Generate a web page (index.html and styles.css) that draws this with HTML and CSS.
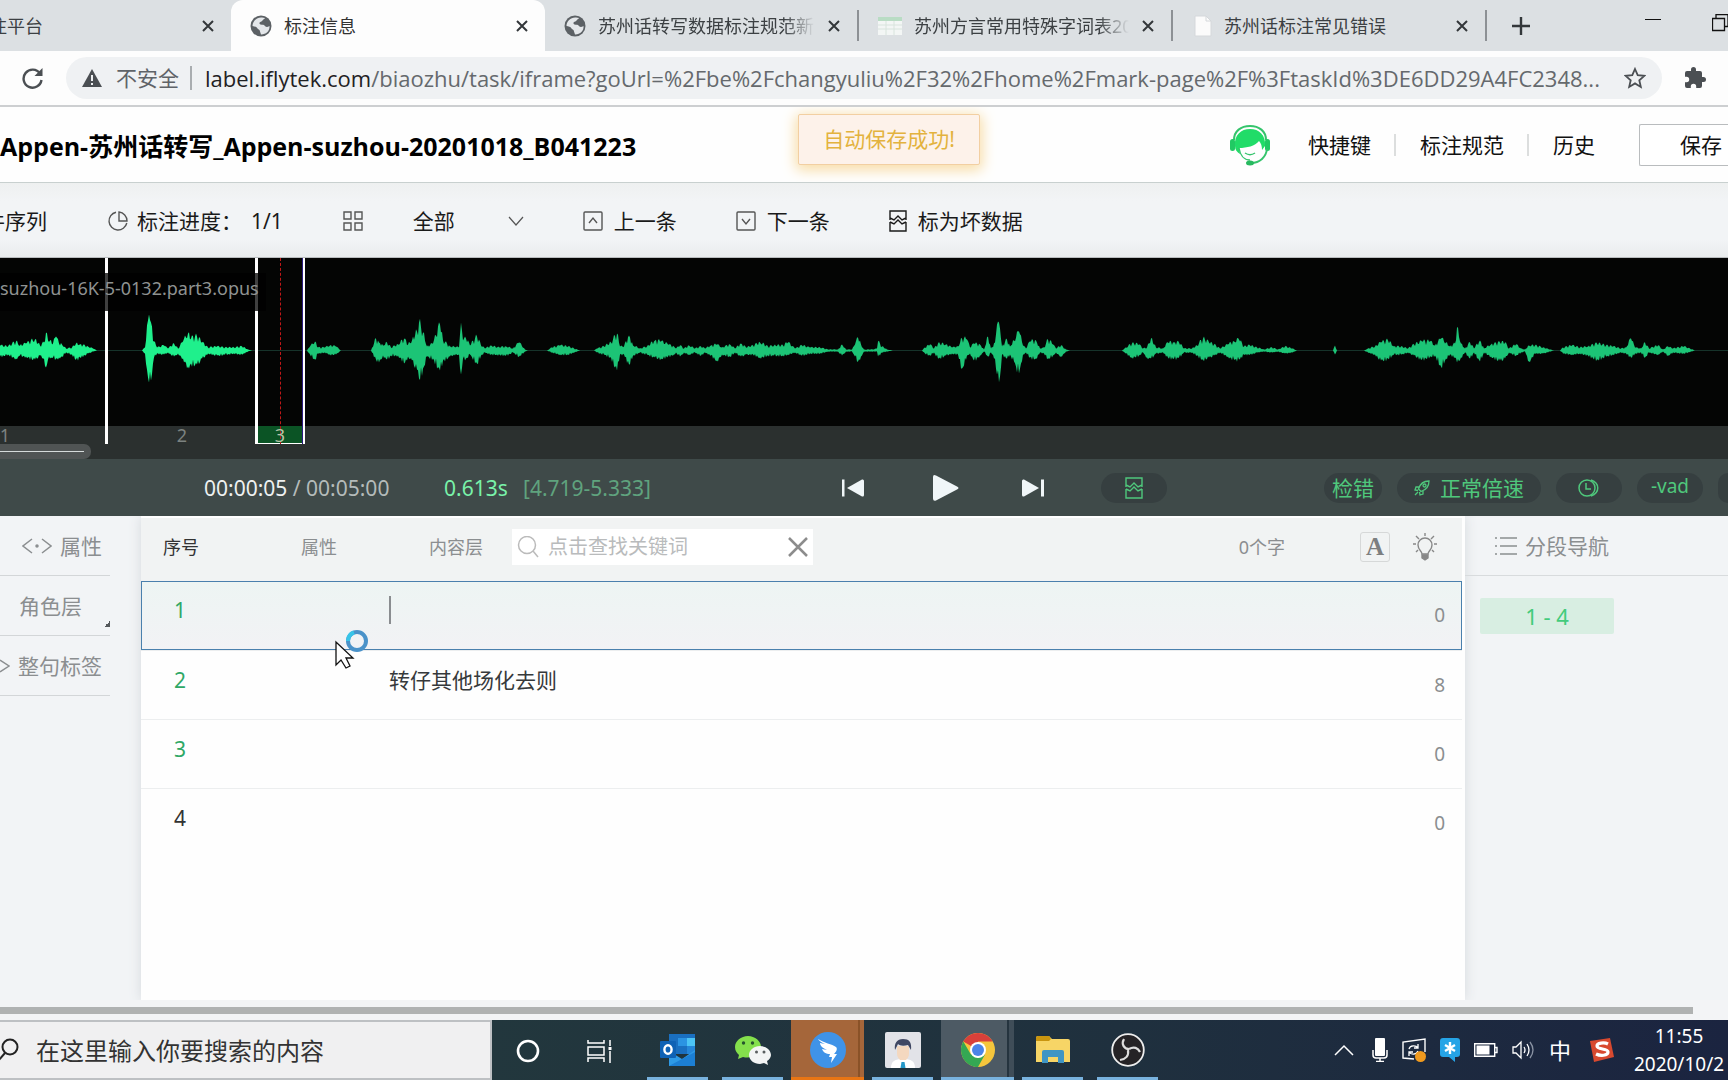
FILE: index.html
```html
<!DOCTYPE html>
<html lang="zh-CN">
<head>
<meta charset="utf-8">
<title>标注信息</title>
<link rel="stylesheet" href="styles.css">
</head>
<body>
<svg class="defs" aria-hidden="true">
  <symbol id="globe" viewBox="0 0 22 22"><circle cx="11" cy="11" r="10.500" fill="#5c6165"/><path d="M12 2.500C7 2 2.500 6 2.500 11c2 .5 4 .5 5 2.500 1 1.500 2.500 1 2.500 3l1 3c5 .2 9-3.500 8.500-8.500-2.500 1.500-4 1-5-.5-1.500-1.500-4.500 0-5-2s2.500-1.500 3-3 2-1 2.500-2.500z" fill="#e4e7ea"/></symbol>
  <symbol id="close" viewBox="0 0 14 14"><path d="M2 2l10 10M12 2L2 12" stroke="currentColor" stroke-width="2" fill="none"/></symbol>
  <symbol id="bad" viewBox="0 0 18 22"><path d="M1 8V1h16v7M1 8l4 2 4-4 4 4 4-2M1 12v9h16v-9M1 12l4 2 4-4 4 4 4-2M1 8v2M17 8v2" fill="none" stroke="currentColor" stroke-width="1.400"/></symbol>
</svg>

<nav class="tabs" aria-label="标签页">
  <div class="tab tab-first"><span class="tab-label">标注平台</span><button class="x" aria-label="关闭"><svg width="14" height="14"><use href="#close"/></svg></button></div>
  <div class="tab tab-active"><svg width="22" height="22"><use href="#globe"/></svg><span class="tab-label">标注信息</span><button class="x" aria-label="关闭"><svg width="14" height="14"><use href="#close"/></svg></button></div>
  <div class="tab tab-line"><svg width="22" height="22"><use href="#globe"/></svg><span class="tab-label fade">苏州话转写数据标注规范新1</span><button class="x" aria-label="关闭"><svg width="14" height="14"><use href="#close"/></svg></button></div>
  <div class="tab tab-line"><svg width="24" height="18" viewBox="0 0 24 18"><path fill="#f3f6f5" d="M0 0h24v18H0z"/><path fill="#b9dcc4" d="M0 0h24v4H0z"/><path d="M0 8h24M0 12h24M8 4v14M16 4v14" stroke="#d8e4dd"/></svg><span class="tab-label fade">苏州方言常用特殊字词表2020</span><button class="x" aria-label="关闭"><svg width="14" height="14"><use href="#close"/></svg></button></div>
  <div class="tab tab-line tab-doc"><svg width="18" height="22" viewBox="0 0 18 22"><path d="M1 1h11l5 5v15H1z" fill="#fbfbfb" stroke="#d5d8db"/><path d="M12 1v5h5" fill="none" stroke="#d5d8db"/></svg><span class="tab-label">苏州话标注常见错误</span><button class="x" aria-label="关闭"><svg width="14" height="14"><use href="#close"/></svg></button></div>
  <button class="newtab" aria-label="新标签页"><svg width="18" height="18" viewBox="0 0 18 18"><path d="M9 0v18M0 9h18" stroke="#33373a" stroke-width="2.400"/></svg></button>
  <div class="winbtns">
    <button aria-label="最小化"><svg width="16" height="18" viewBox="0 0 16 18"><path d="M0 5.500h16" stroke="#111"/></svg></button>
    <button aria-label="还原"><svg width="17" height="18" viewBox="0 0 17 18"><path d="M.5 4.500h12v12H.500zM4 4.500v-4h12v12h-3.500" fill="none" stroke="#111" stroke-width="1.300"/></svg></button>
  </div>
</nav>

<div class="addressbar">
  <button class="reload" aria-label="重新加载"><svg width="24" height="22" viewBox="0 0 24 22"><path d="M19 6.500A9 9 0 1 0 20.500 13" fill="none" stroke="#4b4f53" stroke-width="2.400"/><path d="M21.500 1v8h-8z" fill="#4b4f53"/></svg></button>
  <div class="omnibox">
    <svg width="20" height="18" viewBox="0 0 20 18"><path d="M10 0l10 18H0z" fill="#4b4f53"/><path d="M10 6v6M10 14v2" stroke="#eff1f3" stroke-width="2"/></svg>
    <span class="unsafe">不安全</span>
    <span class="url"><b>label.iflytek.com</b>/biaozhu/task/iframe?goUrl=%2Fbe%2Fchangyuliu%2F32%2Fhome%2Fmark-page%2F%3FtaskId%3DE6DD29A4FC2348...</span>
    <button aria-label="收藏"><svg width="22" height="22" viewBox="0 0 22 22"><path d="M11 2l2.700 6.200 6.600.6-5 4.500 1.500 6.600L11 16.400l-5.800 3.500 1.500-6.600-5-4.500 6.600-.6z" fill="none" stroke="#4b4f53" stroke-width="1.800"/></svg></button>
  </div>
  <button class="ext" aria-label="扩展程序"><svg width="24" height="24" viewBox="0 0 24 24"><path d="M20.500 11H19V7a2 2 0 0 0-2-2h-4V3.500a2.500 2.500 0 0 0-5 0V5H4a2 2 0 0 0-2 2v3.800h1.500a2.700 2.700 0 0 1 0 5.400H2V20a2 2 0 0 0 2 2h3.800v-1.500a2.700 2.700 0 0 1 5.400 0V22H17a2 2 0 0 0 2-2v-4h1.500a2.500 2.500 0 0 0 0-5z" fill="#4b4f53"/></svg></button>
</div>

<header class="head">
  <h1>Appen-苏州话转写_Appen-suzhou-20201018_B041223</h1>
  <svg class="service" width="40" height="42" viewBox="0 0 40 42"><path d="M4 16C4 7 11 2 20 2s16 5 16 14" fill="none" stroke="#35c46c" stroke-width="2"/><path d="M5 22C4 11 11 5 20 5s16 6 15 17l-3 4c0-4-1-7-3-9-4 5-12 7-20 7l1 6c-3-2-5-4-5-8z" fill="#21dc68"/><path d="M9 24c1 7 5 12 11 12" fill="none" stroke="#35c46c" stroke-width="1.500"/><path d="M15 29c3 2 7 2 10 0" fill="none" stroke="#35c46c" stroke-width="1.500"/><rect x="0" y="15" width="5" height="12" rx="2.500" fill="#21c963"/><rect x="35" y="15" width="5" height="12" rx="2.500" fill="#21c963"/><path d="M37 25c-1 8-7 14-16 14" fill="none" stroke="#35c46c" stroke-width="2"/><ellipse cx="20" cy="39" rx="4" ry="2.500" fill="#27b95f"/></svg>
  <nav class="headlinks"><a href="#">快捷键</a><a href="#">标注规范</a><a href="#">历史</a></nav>
  <button class="save">保存</button>
  <div class="toast" role="status">自动保存成功!</div>
</header>

<div class="toolbar">
  <span class="seq">文件序列</span>
  <span class="tool t-progress"><svg width="20" height="20" viewBox="0 0 20 20"><path d="M8 1.200A9 9 0 1 0 18.800 12M11 1v9h8A9 9 0 0 0 11 1z" fill="none" stroke="#555" stroke-width="1.400"/></svg>标注进度：<span>1/1</span></span>
  <button class="tool t-grid" aria-label="宫格"><svg width="20" height="20" viewBox="0 0 20 20" fill="none" stroke="#555" stroke-width="1.400"><path d="M1 1h7v7H1zM12 1h7v7h-7zM1 12h7v7H1zM12 12h7v7h-7z"/></svg></button>
  <button class="tool t-all">全部<svg width="16" height="10" viewBox="0 0 16 10"><path d="M1 1l7 8 7-8" fill="none" stroke="#555" stroke-width="1.200"/></svg></button>
  <button class="tool t-prev"><svg width="20" height="20" viewBox="0 0 20 20" fill="none" stroke="#555" stroke-width="1.400"><rect x="1" y="1" width="18" height="18" rx="1"/><path d="M6 12l4-5 4 5"/></svg>上一条</button>
  <button class="tool t-next"><svg width="20" height="20" viewBox="0 0 20 20" fill="none" stroke="#555" stroke-width="1.400"><rect x="1" y="1" width="18" height="18" rx="1"/><path d="M6 8l4 5 4-5"/></svg>下一条</button>
  <button class="tool t-bad"><svg width="18" height="22"><use href="#bad"/></svg>标为坏数据</button>
</div>

<section class="wave" aria-label="波形">
  <svg class="plot" width="1728" height="168" viewBox="0 0 1728 168"><path d="M0 92.500h1728" stroke="#16332a"/><path id="wave-near" fill="#1ff08c"/><path id="wave-far" fill="#1cc476"/></svg>
  <div class="ruler"></div>
  <i class="mark m1"></i><i class="mark m2"></i><i class="mark m3"></i>
  <i class="region"></i><i class="playhead"></i>
  <span class="num n1">1</span><span class="num n2">2</span><span class="num n3">3</span>
  <span class="filename">suzhou-16K-5-0132.part3.opus</span>
  <i class="scroll"></i>
</section>

<section class="player">
  <span class="time"><b>00:00:05</b> / 00:05:00</span>
  <span class="dur">0.613s</span><span class="range">[4.719-5.333]</span>
  <div class="transport">
    <button aria-label="上一段"><svg width="22" height="20" viewBox="0 0 22 20"><path d="M1 1.500v17" stroke="#f0f6f8" stroke-width="3"/><path d="M5 10L20 1.500q2-.5 2 1.500v14q0 2-2 1.500z" fill="#f0f6f8"/></svg></button>
    <button class="play" aria-label="播放"><svg width="26" height="26" viewBox="0 0 26 26"><path d="M0 2q0-3 3-1.500l21 11q3 1.500 0 3l-21 11q-3 1-3-2z" fill="#f0f6f8"/></svg></button>
    <button aria-label="下一段"><svg width="22" height="20" viewBox="0 0 22 20"><path d="M20.500 1.500v17" stroke="#f0f6f8" stroke-width="3"/><path d="M17 10L2 1.500q-2-.5-2 1.500v14q0 2 2 1.500z" fill="#f0f6f8"/></svg></button>
  </div>
  <button class="pill p-bad" aria-label="坏数据"><svg width="18" height="22"><use href="#bad"/></svg></button>
  <button class="pill p-check">检错</button>
  <button class="pill p-speed"><svg width="16" height="16" viewBox="0 0 16 16" fill="none" stroke="currentColor" stroke-width="1.300"><path d="M4.500 9C6 4 9 1 15 1c0 6-3 9-8 10.500zM5 7H2L1 10l3 .5M9 11v3l-3 1-.5-3M1 15l3-3"/><circle cx="10.500" cy="5.500" r="1.500"/></svg>正常倍速</button>
  <button class="pill p-clock" aria-label="时钟"><svg width="22" height="18" viewBox="0 0 22 18" fill="none" stroke="currentColor" stroke-width="1.500"><circle cx="9" cy="9" r="8"/><path d="M8 4v6h5M13 1c9 3 9 13 0 16"/></svg></button>
  <button class="pill p-vad">-vad</button>
  <button class="pill p-more" aria-label="更多"></button>
</section>

<main class="work">
  <aside class="left">
    <button class="side s-attr"><svg width="30" height="18" viewBox="0 0 30 18" fill="none" stroke="currentColor" stroke-width="1.500"><path d="M10 2L1 9l9 7M20 2l9 7-9 7"/><circle cx="15" cy="9" r="1" fill="currentColor"/></svg>属性</button>
    <button class="side s-role">角色层</button>
    <button class="side s-tag"><svg width="10" height="16" viewBox="0 0 10 16" fill="none" stroke="currentColor" stroke-width="1.500"><path d="M0 2l9 6-9 6"/></svg>整句标签</button>
  </aside>

  <section class="center">
    <table class="rows">
      <colgroup><col class="c1"><col class="c2"><col><col class="c4"></colgroup>
      <thead><tr>
        <th class="h-no">序号</th><th class="h-attr">属性</th>
        <th class="h-main" colspan="2"><div class="headbar">
          <span>内容层</span>
          <div class="search"><svg width="22" height="22" viewBox="0 0 22 22" fill="none" stroke="#bbb" stroke-width="1.500"><circle cx="10" cy="9" r="8.500"/><path d="M16 15l5 6"/></svg><input type="text" placeholder="点击查找关键词" aria-label="查找关键词"><button aria-label="清除"><svg width="20" height="20" viewBox="0 0 20 20"><path d="M1 1l18 18M19 1L1 19" stroke="#8c8c8c" stroke-width="2.500"/></svg></button></div>
          <span class="words">0个字</span>
          <button class="font" aria-label="字体">A</button>
          <button class="bulb" aria-label="提示"><svg width="24" height="28" viewBox="0 0 24 28" fill="none" stroke="#888" stroke-width="1.400"><path d="M9 21c0-3-4-4-4-9a7 7 0 0 1 14 0c0 5-4 6-4 9zM12 0v3M0 11h3M21 11h3M3 3l3 3M21 3l-3 3M3 19l2-2M21 19l-2-2"/><path d="M9 22h6v3l-3 2-3-2z" fill="#888"/></svg></button>
        </div></th>
      </tr></thead>
      <tbody>
        <tr class="current"><td class="no">1</td><td></td><td class="txt"><i class="caret"></i></td><td class="cnt">0</td></tr>
        <tr><td class="no">2</td><td></td><td class="txt">转仔其他场化去则</td><td class="cnt">8</td></tr>
        <tr><td class="no">3</td><td></td><td class="txt"></td><td class="cnt">0</td></tr>
        <tr class="last"><td class="no">4</td><td></td><td class="txt"></td><td class="cnt">0</td></tr>
      </tbody>
    </table>
  </section>

  <aside class="right">
    <h2><svg width="22" height="18" viewBox="0 0 22 18" stroke="currentColor" stroke-width="1.500"><path d="M5 1h17M5 9h17M5 17h17M0 1h2M0 9h2M0 17h2"/></svg>分段导航</h2>
    <button class="seg">1 - 4</button>
  </aside>

  <svg class="pointer" width="34" height="40" viewBox="0 0 34 40"><circle cx="22" cy="11" r="9" fill="none" stroke="#4a92c9" stroke-width="4"/><path d="M13 11a9 9 0 0 1 6-8.500" fill="none" stroke="#38c4e8" stroke-width="4"/><path d="M1 12v23l5-5 5 8 4-2-4-8h7z" fill="#fff" stroke="#111" stroke-width="1.300"/></svg>
</main>

<div class="hscroll"><i></i></div>

<footer class="taskbar">
  <label class="tsearch"><svg width="20" height="24" viewBox="0 0 20 24" fill="none" stroke="#222" stroke-width="2"><circle cx="10" cy="9" r="7.500"/><path d="M5 15l-6 7"/></svg><input type="text" placeholder="在这里输入你要搜索的内容" aria-label="搜索"></label>
  <button class="app plain a-cortana" aria-label="Cortana"><svg width="24" height="24" viewBox="0 0 24 24"><circle cx="12" cy="12" r="10" fill="none" stroke="#fff" stroke-width="2.600"/></svg></button>
  <button class="app plain a-view" aria-label="任务视图"><svg width="26" height="24" viewBox="0 0 26 24" fill="none" stroke="#fff" stroke-width="1.500"><path d="M1 1v3h16V1M1 8h16v8H1zM1 23v-4h16v4M23 1v6M23 12v12"/><path d="M21.500 8h3v3h-3z" fill="#fff" stroke="none"/></svg></button>
  <button class="app a-outlook" aria-label="Outlook"><svg width="36" height="34" viewBox="0 0 36 34"><path d="M9 1h26v20H9z" fill="#1a6fc0"/><path d="M18 5h9v8h-9z" fill="#2b93e2"/><path d="M27 5h8v8h-8z" fill="#4cc4f5"/><path d="M27 13h8v8h-8z" fill="#2586d8"/><path d="M9 18l13 8 13-9v16H9z" fill="#2e9ae6"/><path d="M9 33l26-14v14z" fill="#1c7fd4"/><rect y="8" width="16" height="17" rx="1" fill="#0f62b5"/><ellipse cx="8" cy="16.500" rx="3.600" ry="4.300" fill="none" stroke="#fff" stroke-width="2.400"/></svg></button>
  <button class="app a-wechat" aria-label="微信"><svg width="36" height="32" viewBox="0 0 36 32"><path d="M13 2C6 2 0 7 0 13c0 4 2 6 4 8l-1 4 5-2c8 2 18-2 18-10C26 7 20 2 13 2z" fill="#84e04c"/><path d="M25 12c-6 0-11 4-11 9s5 9 11 9l4-1 4 2-1-4c2-1 4-4 4-6 0-5-5-9-11-9z" fill="#f3f5f5"/><circle cx="8.500" cy="9" r="1.700" fill="#26562e"/><circle cx="17.500" cy="9" r="1.700" fill="#26562e"/><circle cx="21.500" cy="18" r="1.500" fill="#5a5f60"/><circle cx="29" cy="18" r="1.500" fill="#5a5f60"/></svg></button>
  <button class="app alert a-ding" aria-label="钉钉"><svg width="36" height="36" viewBox="0 0 36 36"><circle cx="18" cy="18" r="18" fill="#3f93e8"/><path d="M8 7c6 4 14 5 18 8 2 2 0 5-2 7h3l-6 9 1-6h-3l1-3c-4 0-7-2-8-5l5 1c-4-2-7-4-7-7l5 1C11 10 9 9 8 7z" fill="#fff"/></svg></button>
  <button class="app a-user" aria-label="客服"><svg width="36" height="36" viewBox="0 0 36 36"><rect width="36" height="36" rx="2" fill="#e2e3e8"/><path d="M6 36c0-7 4-9 12-9s12 2 12 9z" fill="#fff"/><path d="M12 14h12v8c0 3-2 5-3 6h-6c-1-1-3-3-3-6z" fill="#f4d8bf"/><path d="M10 18c-1-7 2-11 8-11s9 3 8 11l-3-5c-4 1-8 1-10-1z" fill="#3f4763"/><path d="M16.500 30h3l1 6h-5z" fill="#2397c8"/></svg></button>
  <button class="app focus a-chrome" aria-label="Chrome"><svg width="34" height="34" viewBox="0 0 34 34"><circle cx="17" cy="17" r="17" fill="#f5c63c"/><path d="M17 17L2.300 8.500A17 17 0 0 1 31.700 8.500H17z" fill="#d9403a"/><path d="M2.300 8.500A17 17 0 0 0 17 34l7-12.500L17 25 9.600 21z" fill="#34a853"/><circle cx="17" cy="17" r="8" fill="#fff"/><circle cx="17" cy="17" r="6" fill="#4a84e8"/></svg></button>
  <button class="app a-folder" aria-label="文件资源管理器"><svg width="34" height="28" viewBox="0 0 34 28"><path d="M0 2q0-2 2-2h11l3 3h16q2 0 2 2v21H0z" fill="#f7d566"/><path d="M0 2q0-2 2-2h11l2 3-2 2H0z" fill="#c9950f"/><path d="M6 27V16q0-2 2-2h18q2 0 2 2v11h-6v-6H12v6z" fill="#3f95c4"/></svg></button>
  <button class="app a-obs" aria-label="OBS"><svg width="34" height="34" viewBox="0 0 34 34"><circle cx="17" cy="17" r="15.800" fill="#252326" stroke="#eee" stroke-width="1.800"/><path d="M13 6c-3 5 0 10 5 10M18 16c5-3 9-1 11 3M17 17c1 6-2 9-8 10" fill="none" stroke="#ddd" stroke-width="2.200"/></svg></button>
  <div class="tray">
    <svg class="up" width="20" height="12" viewBox="0 0 20 12"><path d="M1 11l9-9 9 9" fill="none" stroke="#fff" stroke-width="1.500"/></svg>
    <svg width="16" height="24" viewBox="0 0 16 24"><rect x="3" y="0" width="10" height="18" rx="1" fill="#fff"/><path d="M1 12v5q0 3 3 3h8q3 0 3-3v-5M8 20v3M4 23.500h8" fill="none" stroke="#fff" stroke-width="1.500"/></svg>
    <svg width="24" height="24" viewBox="0 0 24 24"><path d="M12 21L1 20V4l22-3v13" fill="none" stroke="#fff" stroke-width="1.400"/><path d="M7 11c1-4 7-4 9-1m0-4v4h-4M16 13c-2 4-7 4-9 1m0 4v-4h4" fill="none" stroke="#fff" stroke-width="1.300"/><circle cx="18.500" cy="18.500" r="5.500" fill="#f09a1e"/></svg>
    <svg width="20" height="24" viewBox="0 0 20 24"><path d="M3 0h14q3 0 3 3v13q0 3-3 3h-2v5l-6-5H3q-3 0-3-3V3q0-3 3-3z" fill="#26a4e6"/><path d="M10 4v12M5 7l10 6M15 7L5 13" stroke="#fff" stroke-width="2.400"/></svg>
    <svg width="24" height="14" viewBox="0 0 24 14"><path d="M.7.7h20v12.600H.700zM21 4.500h2v5h-2" fill="none" stroke="#fff" stroke-width="1.400"/><path d="M2.500 2.500h13v9h-13z" fill="#fff"/></svg>
    <svg width="22" height="20" viewBox="0 0 22 20"><path d="M1 7v6h3l5 5V2L4 7zM12 7q2 3 0 6M15 4q4 6 0 12" fill="none" stroke="#fff" stroke-width="1.300"/><path d="M18 2q6 8 0 16" fill="none" stroke="#8a93a3" stroke-width="1.300"/></svg>
    <span class="ime">中</span>
    <svg class="sogou" width="24" height="24" viewBox="0 0 24 24"><path d="M0 3l20-3 4 19-20 5z" fill="#d8492f"/><path d="M18 6c-4-2-11-1-11 2 0 4 11 2 11 6 0 4-8 4-12 2" fill="none" stroke="#fff" stroke-width="3.200"/></svg>
    <div class="clock"><span>11:55</span><span>2020/10/2</span></div>
  </div>
</footer>
<script src="wave.js"></script>
</body>
</html>
```
FILE: wave.js
```js
// Envelope of the audio: x, height above the axis, height below the axis.
const near = "0,5,6 8,4,4 16,9,8 20,5,5 26,7,6 35,11,9 40,5,5 44,8,8 46,18,17 48,10,9 50,10,8 53,7,7 56,14,8 59,7,7 62,6,6 66,2,2 72,3,4 76,7,9 80,6,7 88,4,3 93,2,1 97,0,0 142,0,0 145,3,3 148,30,27 149,36,32 151,28,30 154,9,7 157,3,3 164,5,4 168,2,2 174,7,6 178,2,3 183,9,8 188,17,16 191,12,13 197,14,14 202,8,8 208,3,3 217,4,5 225,3,4 234,3,3 242,4,4 248,1,1 252,0,0";
const far = "307,0,0 310,4,4 315,9,9 318,3,3 325,3,2 330,5,4 336,4,4 341,0,0 371,0,0 376,12,9 379,8,12 383,5,5 387,8,9 391,3,5 398,6,5 405,12,12 408,6,6 412,10,10 417,19,19 419,28,28 423,18,18 427,4,6 433,7,8 440,26,20 443,10,10 450,4,6 454,4,4 459,3,4 461,28,24 463,10,8 466,12,8 470,5,4 477,14,13 481,5,5 485,2,2 491,5,4 497,3,4 506,4,5 513,2,2 519,8,6 525,1,1 528,0,0 547,0,0 552,3,2 560,5,4 568,4,4 580,0,0 594,0,0 597,2,2 604,4,4 611,8,7 617,17,20 620,4,4 624,4,4 629,15,14 633,5,5 640,2,2 647,4,4 655,10,7 661,9,8 668,6,6 674,4,4 676,2,2 680,5,6 684,2,2 689,5,4 695,2,2 701,4,5 705,2,2 711,5,5 717,6,10 722,3,4 730,6,6 735,2,2 741,7,6 746,3,4 753,5,4 760,8,7 768,4,5 774,5,5 783,5,5 788,8,4 795,2,2 802,5,5 810,3,3 820,3,3 828,1,1 838,1,1 842,6,5 846,1,1 852,1,1 855,6,6 858,13,11 861,6,6 864,1,1 873,1,1 877,2,1 878,9,6 882,4,2 887,1,1 893,0,0 922,0,0 925,3,3 930,6,5 934,2,2 938,7,8 946,6,5 952,3,3 958,4,4 962,12,18 967,11,5 970,3,3 974,7,10 980,6,5 984,1,1 988,14,6 991,2,2 995,8,8 997,26,24 1000,22,26 1002,4,4 1007,11,8 1010,4,4 1014,10,11 1019,19,23 1023,5,4 1026,2,2 1030,9,7 1036,10,8 1040,2,2 1044,3,3 1048,11,8 1053,6,5 1056,2,2 1061,5,6 1066,1,1 1070,0,0 1122,0,0 1126,3,3 1132,7,7 1139,6,5 1143,2,2 1147,3,7 1151,12,8 1156,3,3 1163,2,2 1168,8,7 1174,8,8 1179,8,7 1184,2,2 1192,2,2 1197,5,5 1203,12,9 1209,8,7 1214,6,5 1220,2,2 1228,6,6 1234,9,9 1239,11,9 1244,4,4 1250,5,4 1257,3,2 1264,1,1 1272,3,2 1278,1,1 1285,4,3 1292,2,2 1297,0,0 1333,0,0 1335,5,4 1337,0,0 1364,0,0 1368,2,2 1375,4,4 1381,8,10 1388,10,8 1394,4,4 1401,4,4 1408,2,2 1414,6,5 1422,9,9 1430,9,6 1435,5,5 1441,12,16 1446,8,8 1450,4,4 1455,7,7 1457,23,12 1461,7,7 1465,2,2 1470,8,8 1474,2,2 1480,10,11 1484,2,2 1491,6,6 1500,8,10 1505,8,8 1509,2,2 1516,6,5 1521,2,2 1525,1,1 1529,5,11 1535,5,3 1543,3,3 1550,1,1 1554,0,0 1560,0,0 1563,3,3 1572,5,4 1580,3,3 1588,4,5 1597,7,9 1606,5,6 1613,4,4 1621,2,2 1626,3,3 1631,12,7 1635,3,3 1641,2,2 1645,8,7 1649,2,2 1658,5,4 1663,1,1 1668,4,5 1673,2,2 1684,4,3 1695,0,0";

function outline(data) {
  const pts = data.split(" ").map(p => p.split(",").map(Number));
  const mid = 92.5;
  const top = [], bottom = [];
  let k = 0;
  for (let x = pts[0][0]; x <= pts[pts.length - 1][0]; x++) {
    while (k < pts.length - 2 && x > pts[k + 1][0]) k++;
    const a = pts[k], b = pts[k + 1];
    const t = (x - a[0]) / (b[0] - a[0]);
    // Samples between the peaks vary, so that the edge looks like speech.
    const atPoint = x === a[0] || x === b[0];
    const up = atPoint ? 1 : 0.6 + 0.65 * Math.abs(Math.sin(x * 2.3));
    const down = atPoint ? 1 : 0.6 + 0.65 * Math.abs(Math.sin(x * 1.9 + 1));
    top.push(x + " " + (mid - (a[1] + (b[1] - a[1]) * t) * up));
    bottom.unshift(x + " " + (mid + (a[2] + (b[2] - a[2]) * t) * down));
  }
  return "M" + top.concat(bottom).join("L") + "Z";
}
document.getElementById("wave-near").setAttribute("d", outline(near));
document.getElementById("wave-far").setAttribute("d", outline(far));
```
FILE: styles.css
```css
* { box-sizing: border-box; }
html { height: 100%; overflow: hidden; }
body {
  margin: 0; min-height: 100%; display: flex; flex-direction: column; overflow: hidden;
  font-family: "Noto Sans", "Noto Sans CJK SC", sans-serif; font-size: 21px; line-height: 30px;
  color: #1a1a1a; background: #fdfdfd;
}
button, input { font: inherit; color: inherit; border: 0; background: none; padding: 0; margin: 0; }
svg { flex: none; display: block; }
i { display: block; }
.defs { position: absolute; width: 0; height: 0; }

/* browser tabs */
.tabs { display: flex; height: 51px; background: #dce0e3; }
.tab { flex: 0 0 314px; min-width: 0; display: flex; align-items: center; gap: 12px; padding: 0 16px 0 19px; font-size: 18px; color: #3c4043; }
.tab-first { flex-basis: 231px; padding-left: 0; }
.tab-first .tab-label { display: flex; justify-content: flex-end; flex: 0 0 43px; }
.tab-first .x { margin-left: auto; }
.tab-active { background: #fdfdfd; border-radius: 12px 12px 0 0; color: #333; }
.tab-label { flex: 1; min-width: 0; white-space: nowrap; overflow: hidden; }
.fade { -webkit-mask-image: linear-gradient(90deg, #000 86%, transparent); mask-image: linear-gradient(90deg, #000 86%, transparent); }
.tab-line { border-right: 2px solid #8d9195; border-image: linear-gradient(transparent 11px, #8d9195 11px, #8d9195 40px, transparent 40px) 1; }
.tab-doc { padding-left: 21px; }
.x { flex: none; width: 14px; height: 14px; color: #33373a; }
.newtab { margin-left: 25px; }
.winbtns { display: flex; align-items: center; gap: 52px; margin-left: auto; padding-bottom: 6px; }
.winbtns button { margin-right: -1px; }

/* address bar */
.addressbar { display: flex; align-items: center; height: 56px; padding: 0 21px; background: #fdfdfd; border-bottom: 2px solid #cdcfd1; }
.omnibox { flex: 1; min-width: 0; height: 42px; margin: 0 21px; padding: 0 16px; display: flex; align-items: center; border-radius: 21px; background: #eff1f3; }
.unsafe { margin: 0 9px 0 14px; padding-right: 11px; border-right: 2px solid #a9adb0; line-height: 24px; color: #5f6368; }
.url { flex: 1; min-width: 0; white-space: nowrap; overflow: hidden; padding-left: 4px; color: #65696d; font-size: 22px; font-family: "Open Sans", sans-serif; }
.url b { font-weight: 400; color: #1f2123; }

/* page header */
.head { position: relative; display: flex; align-items: center; height: 76px; border-bottom: 1px solid #c8d0cf; background: #fefefe; color: #111; overflow: hidden; }
h1 { margin: 0; padding-top: 2px; font-size: 25px; line-height: 34px; white-space: nowrap; color: #000; font-family: "Open Sans", "Noto Sans CJK SC", sans-serif; }
.service { margin-left: auto; }
.headlinks { display: flex; align-items: center; margin-left: 38px; }
.headlinks a { color: inherit; text-decoration: none; line-height: 22px; }
.headlinks a + a { border-left: 2px solid #dcdede; margin-left: 23px; padding-left: 24px; }
.save { width: 89px; height: 42px; margin-left: 44px; padding-left: 40px; text-align: left; border: 1px solid #b9bcbe; border-right: 0; border-radius: 2px 0 0 2px; background: #fff; }
.toast { position: absolute; left: 798px; top: 7px; width: 182px; height: 51px; line-height: 48px; text-align: center; color: #e3b23e; background: #fdf2ea; border: 1px solid #f2cfa2; border-radius: 2px; box-shadow: 0 3px 14px 2px #f8dca4; }

/* tool bar */
.toolbar { display: flex; align-items: center; height: 75px; background: linear-gradient(#eef0f0, #f2f4f6 18px, #f2f4f6 56px, #e9eced); border-bottom: 1px solid #b9bcbe; padding-top: 2px; }
.seq { width: 47px; display: flex; justify-content: flex-end; white-space: nowrap; overflow: hidden; }
.tool { display: flex; align-items: center; gap: 11px; white-space: nowrap; }
.t-progress { margin-left: 61px; gap: 9px; }
.t-grid { margin-left: 60px; }
.t-all { margin-left: 50px; gap: 53px; }
.t-prev { margin-left: 59px; }
.t-next { margin-left: 59px; }
.t-bad { margin-left: 59px; }

/* waveform */
.wave { position: relative; height: 201px; background: #040504; overflow: hidden; }
.plot { position: absolute; left: 0; top: 0; }
.ruler { position: absolute; inset: 168px 0 0; background: #2b302f; }
.mark { position: absolute; top: 0; height: 186px; width: 3px; background: #fff; }
.m1 { left: 105px; }
.m2 { left: 255px; }
.m3 { left: 303px; width: 2px; box-shadow: -1px 0 #2a1a80; }
.region { position: absolute; left: 258px; top: 168px; width: 44px; height: 18px; background: #0b5425; border-bottom: 1px solid #fff; }
.playhead { position: absolute; left: 280px; top: 0; height: 186px; border-left: 1px dashed #c01818; }
.num { position: absolute; top: 165px; font-size: 18px; line-height: 24px; color: #7c8280; transform: translateX(-50%); }
.n1 { left: 5px; }
.n2 { left: 182px; }
.n3 { left: 280px; color: #b6c4a8; }
.filename { position: absolute; left: 0; top: 15px; width: 266px; height: 38px; line-height: 30px; font-size: 18px; color: #8f9291; background: rgba(0, 0, 0, .75); }
.scroll { position: absolute; left: -10px; bottom: 0; width: 101px; height: 15px; border-radius: 7px; background: linear-gradient(90deg, transparent 94px, #505454 94px), linear-gradient(#505454 7px, #d5dada 7px, #d5dada 8px, #505454 8px); }

/* player */
.player { display: flex; align-items: center; height: 57px; padding-left: 204px; background: #3f4a49; color: #b4bbba; white-space: nowrap; overflow: hidden; }
.player b { font-weight: 400; color: #eef1f1; }
.time { width: 240px; flex: none; }
.dur { width: 79px; flex: none; color: #79f2a9; }
.range { width: 319px; flex: none; color: #5fa37e; }
.transport { display: flex; align-items: center; justify-content: space-between; width: 202px; flex: none; }
.play { padding-left: 6px; }
.pill { flex: none; height: 30px; border-radius: 15px; background: #363f40; color: #4fc87c; display: flex; align-items: center; justify-content: center; line-height: 28px; }
.p-bad { width: 66px; margin-left: 57px; }
.p-check { width: 58px; margin-left: auto; }
.p-speed { width: 144px; gap: 10px; margin-left: 15px; }
.p-clock { width: 66px; margin-left: 15px; }
.p-vad { width: 66px; margin-left: 15px; font-size: 19px; padding-bottom: 4px; }
.p-more { width: 10px; margin-left: 15px; border-radius: 15px 0 0 15px; }

/* workspace */
.work { position: relative; flex: 1; display: flex; background: #f2f4f6; color: #8b8e90; overflow: hidden; }
.left { flex: 0 0 141px; padding-right: 31px; }
.side { width: 100%; height: 60px; display: flex; align-items: center; gap: 8px; border-bottom: 1px solid #d3d6d8; white-space: nowrap; }
.s-attr { padding-left: 22px; }
.s-role { padding-left: 19px; background: linear-gradient(135deg, transparent 50%, #55595c 50%) no-repeat right bottom 8px / 6px 6px; }
.center { flex: 1; min-width: 0; background: #fefefe; box-shadow: 0 0 12px #d5d9dd; padding-right: 3px; border-top: 2px solid #fff; }
.rows { width: 100%; border-collapse: collapse; table-layout: fixed; }
.c1 { width: 78px; } .c2 { width: 160px; } .c4 { width: 90px; }
th { height: 63px; padding: 0 0 6px; font-weight: 400; font-size: 18px; text-align: left; background: #f1f3f3; white-space: nowrap; }
.h-no { padding-left: 22px; color: #333; }
.h-attr { padding-left: 82px; }
.h-main { padding-left: 50px; }
.headbar { display: flex; align-items: center; }
.search { width: 301px; height: 36px; margin-left: 29px; display: flex; align-items: center; background: #fff; padding: 0 5px; }
.search input { flex: 1; min-width: 0; margin-left: 9px; font-size: 20px; }
.search input::placeholder { color: #b9bbbc; opacity: 1; }
.words { margin-left: auto; }
.font { width: 30px; height: 30px; margin-left: 75px; border: 1px solid #d6d8d8; border-radius: 3px; font: bold 25px/28px "Liberation Serif", serif; color: #7d7f80; }
.bulb { margin: 0 25px 0 23px; }
td { height: 69px; padding: 0; border-bottom: 1px solid #eceeef; }
.last td { border-bottom: 0; }
.no { padding: 0 0 10px; text-align: center; color: #2fa866; }
.last .no { color: #333; }
.txt { padding: 0 0 10px 10px; color: #36393b; }
.cnt { padding: 0 17px 0 0; text-align: right; font-size: 19px; }
.current { outline: 1px solid #4a80ad; outline-offset: -1px; background: linear-gradient(#edf5f3, #f2f2f5); }
.caret { width: 2px; height: 28px; background: #8a8d90; }
.right { flex: 0 0 263px; }
.right h2 { display: flex; align-items: center; gap: 8px; height: 60px; margin: 0; padding-left: 30px; border-bottom: 1px solid #d8dbdd; font-size: 21px; font-weight: 400; }
.seg { display: block; width: 134px; height: 36px; margin: 22px 0 0 15px; border-radius: 2px; background: #d8eee2; color: #43cb7c; font-size: 22px; }
.pointer { position: absolute; left: 335px; top: 114px; }

.hscroll { height: 20px; background: #f3f4f6; padding-top: 7px; }
.hscroll i { width: 98%; height: 7px; background: #b0b2b2; }

/* taskbar */
.taskbar { display: flex; height: 60px; background: linear-gradient(90deg, #22373d 28%, #1f303e 65%, #1b2440); color: #fff; overflow: hidden; }
.tsearch { flex: 0 0 492px; display: flex; align-items: center; background: #f0f0f1; border: 2px solid #bdc0c3; border-left: 0; }
.tsearch input { flex: 1; min-width: 0; margin-left: 16px; padding-top: 2px; font-size: 24px; }
.tsearch input::placeholder { color: #333; opacity: 1; }
.app { flex: none; width: 61px; display: flex; align-items: center; justify-content: center; border-bottom: 3px solid #78b2de; margin-left: 14px; padding-top: 2px; }
.plain { width: 72px; border: 0; margin: 0; }
.a-outlook { margin-left: 11px; }
.alert { width: 73px; margin-left: 8px; background: linear-gradient(90deg, #a5663a 67px, #8a5228 67px, #8a5228 69px, #a5663a 69px); border-color: #e87514; }
.a-user { margin-left: 8px; }
.focus { width: 73px; margin-left: 8px; background: linear-gradient(90deg, #4d5a64 66px, #25343f 66px, #25343f 68px, #3f4d58 68px); }
.a-folder { margin-left: 8px; }
.tray { margin-left: auto; display: flex; align-items: center; gap: 14px; }
.up { margin-right: 4px; }
.ime { width: 24px; text-align: center; font-size: 22px; }
.sogou { margin: 0 2px 0 4px; }
.clock { display: flex; flex-direction: column; align-items: center; font-size: 19px; line-height: 28px; width: 98px; }
```
